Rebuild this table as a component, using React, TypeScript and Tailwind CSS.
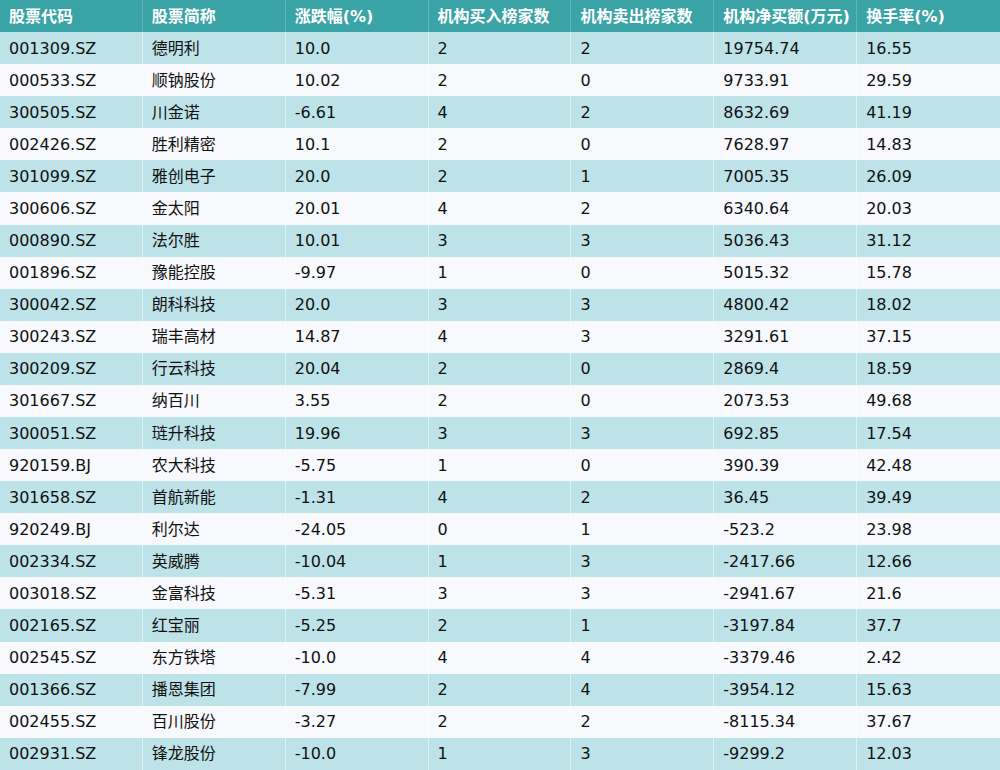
import React from "react";

const headers = ["股票代码", "股票简称", "涨跌幅(%)", "机构买入榜家数", "机构卖出榜家数", "机构净买额(万元)", "换手率(%)"];

const rows: string[][] = [
  ["001309.SZ", "德明利", "10.0", "2", "2", "19754.74", "16.55"],
  ["000533.SZ", "顺钠股份", "10.02", "2", "0", "9733.91", "29.59"],
  ["300505.SZ", "川金诺", "-6.61", "4", "2", "8632.69", "41.19"],
  ["002426.SZ", "胜利精密", "10.1", "2", "0", "7628.97", "14.83"],
  ["301099.SZ", "雅创电子", "20.0", "2", "1", "7005.35", "26.09"],
  ["300606.SZ", "金太阳", "20.01", "4", "2", "6340.64", "20.03"],
  ["000890.SZ", "法尔胜", "10.01", "3", "3", "5036.43", "31.12"],
  ["001896.SZ", "豫能控股", "-9.97", "1", "0", "5015.32", "15.78"],
  ["300042.SZ", "朗科科技", "20.0", "3", "3", "4800.42", "18.02"],
  ["300243.SZ", "瑞丰高材", "14.87", "4", "3", "3291.61", "37.15"],
  ["300209.SZ", "行云科技", "20.04", "2", "0", "2869.4", "18.59"],
  ["301667.SZ", "纳百川", "3.55", "2", "0", "2073.53", "49.68"],
  ["300051.SZ", "琏升科技", "19.96", "3", "3", "692.85", "17.54"],
  ["920159.BJ", "农大科技", "-5.75", "1", "0", "390.39", "42.48"],
  ["301658.SZ", "首航新能", "-1.31", "4", "2", "36.45", "39.49"],
  ["920249.BJ", "利尔达", "-24.05", "0", "1", "-523.2", "23.98"],
  ["002334.SZ", "英威腾", "-10.04", "1", "3", "-2417.66", "12.66"],
  ["003018.SZ", "金富科技", "-5.31", "3", "3", "-2941.67", "21.6"],
  ["002165.SZ", "红宝丽", "-5.25", "2", "1", "-3197.84", "37.7"],
  ["002545.SZ", "东方铁塔", "-10.0", "4", "4", "-3379.46", "2.42"],
  ["001366.SZ", "播恩集团", "-7.99", "2", "4", "-3954.12", "15.63"],
  ["002455.SZ", "百川股份", "-3.27", "2", "2", "-8115.34", "37.67"],
  ["002931.SZ", "锋龙股份", "-10.0", "1", "3", "-9299.2", "12.03"],
];

export default function App() {
  return (
    <div
      className="w-[1000px] h-[770px] flex flex-col bg-[#f8f9fc] text-[16px] text-[#111111] overflow-hidden"
      style={{ fontFamily: '"DejaVu Sans", "Noto Sans CJK SC", sans-serif' }}
    >
      <div className="flex-1 grid grid-cols-7 bg-[#3aa3a6] text-white font-bold">
        {headers.map((h, i) => (
          <div
            key={i}
            className={`flex items-center pl-[9px] pt-px whitespace-nowrap ${i < 6 ? "border-r border-white/20" : ""}`}
          >
            {h}
          </div>
        ))}
      </div>
      {rows.map((r, ri) => (
        <div
          key={ri}
          className={`flex-1 grid grid-cols-7 ${ri % 2 === 0 ? "bg-[#bde3e9]" : "bg-[#f8f9fc]"}`}
        >
          {r.map((c, ci) => (
            <div
              key={ci}
              className={`flex items-center pl-[9px] pt-px whitespace-nowrap ${ci < 6 ? "border-r border-white/50" : ""}`}
            >
              {c}
            </div>
          ))}
        </div>
      ))}
    </div>
  );
}
